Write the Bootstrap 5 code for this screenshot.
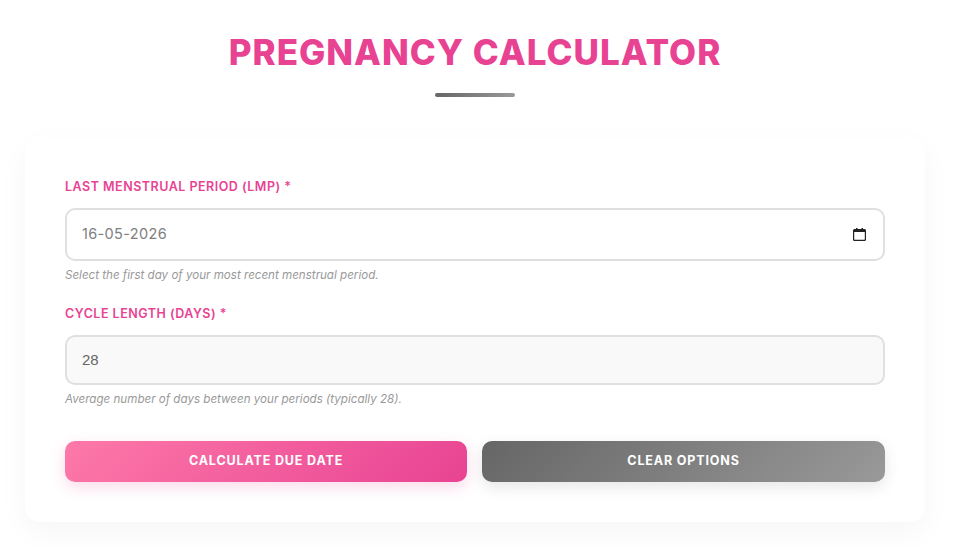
<!DOCTYPE html>
<html lang="en">
<head>
<meta charset="utf-8">
<title>Pregnancy Calculator</title>
<link rel="stylesheet" href="https://cdn.jsdelivr.net/npm/bootstrap@5.3.0/dist/css/bootstrap.min.css">
<style>
html,body{background:#fff;overflow:hidden}
body{font-family:"Inter","Liberation Sans",sans-serif;height:548px}
.pc-page{width:950px;padding:0 25px}
.pc-title{color:#e84393;font-size:35px;line-height:42px;font-weight:800;letter-spacing:1px;text-transform:uppercase;text-align:center;margin:31px 0 0}
.pc-rule{width:80px;height:4px;border-radius:2px;background:linear-gradient(90deg,#666,#999);margin:20px auto 40px}
.pc-card{background:#fff;border-radius:15px;box-shadow:0 10px 30px rgba(0,0,0,.04);padding:40px;height:385px}
.pc-label{display:block;color:#e84393;font-size:12.5px;line-height:20px;font-weight:600;letter-spacing:.5px;text-transform:uppercase;margin:0 0 11px}
.pc-input{height:53px;border:2px solid #e0e0e0;border-radius:10px;padding:0 15px 2px;font-size:14.5px;color:#808080;letter-spacing:.35px;background:#fff;box-shadow:none}
.pc-input-num{height:50px;background:#f9f9f9;color:#666;font-family:"Liberation Sans",sans-serif;font-size:15px;letter-spacing:0}
.pc-cal{position:absolute;right:19px;top:20px;width:13px;height:13px}
.pc-help{font-size:11.6px;line-height:16px;font-style:italic;color:#999;margin-top:6px}
.pc-first{margin-bottom:21px}
.pc-second{margin-bottom:34px}
.pc-btn{height:41px;border:0;border-radius:10px;color:#fff;font-size:12.5px;font-weight:700;letter-spacing:.85px;text-transform:uppercase;padding:0}
.pc-btn:hover,.pc-btn:active{color:#fff}
.pc-btn-pink{flex:0 0 402px;background:linear-gradient(135deg,#fd79a8,#e84393);box-shadow:0 5px 15px rgba(232,67,147,.2)}
.pc-btn-grey{flex:1 1 0;background:linear-gradient(135deg,#666,#999);box-shadow:0 5px 15px rgba(0,0,0,.1)}
.pc-actions{gap:15px}
</style>
</head>
<body>
<div class="pc-page">
  <h1 class="pc-title">Pregnancy Calculator</h1>
  <div class="pc-rule"></div>
  <form class="pc-card">
    <div class="pc-first">
      <label class="pc-label" for="lmp">Last Menstrual Period (LMP) *</label>
      <div class="position-relative">
        <input id="lmp" type="text" class="form-control pc-input" value="16-05-2026">
        <svg class="pc-cal" viewBox="0 0 13 13" aria-hidden="true"><path fill="#222" fill-rule="evenodd" d="M3 0h1.5v1h4V0H10v1h1.5A1.5 1.5 0 0 1 13 2.5v9a1.5 1.5 0 0 1-1.5 1.5h-10A1.5 1.5 0 0 1 0 11.500v-9A1.500 1.500 0 0 1 1.500 1H3V0zM1.200 4v7.300c0 .3.200.5.500.5h9.600c.3 0 .5-.2.500-.5V4H1.200z"/></svg>
      </div>
      <div class="pc-help">Select the first day of your most recent menstrual period.</div>
    </div>
    <div class="pc-second">
      <label class="pc-label" for="cycle">Cycle Length (Days) *</label>
      <input id="cycle" type="text" class="form-control pc-input pc-input-num" value="28">
      <div class="pc-help">Average number of days between your periods (typically 28).</div>
    </div>
    <div class="d-flex pc-actions">
      <button type="button" class="btn pc-btn pc-btn-pink">Calculate Due Date</button>
      <button type="button" class="btn pc-btn pc-btn-grey">Clear Options</button>
    </div>
  </form>
</div>
<script src="https://cdn.jsdelivr.net/npm/bootstrap@5.3.0/dist/js/bootstrap.bundle.min.js"></script>
</body>
</html>
